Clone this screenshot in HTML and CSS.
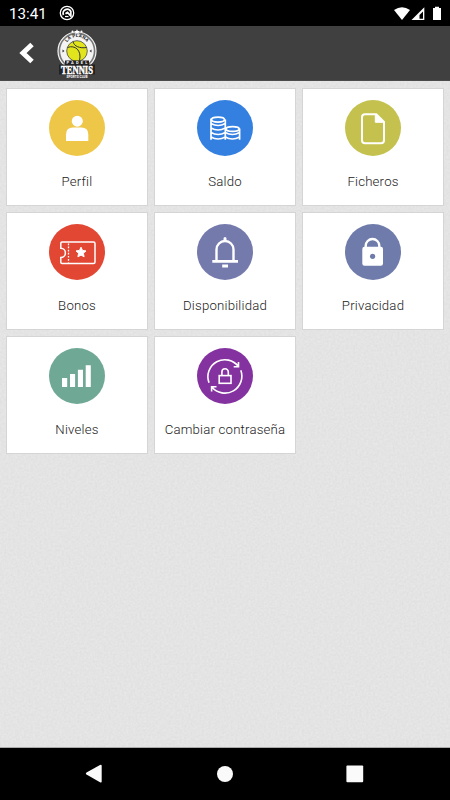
FILE: index.html
```html
<!DOCTYPE html>
<html lang="es">
<head>
<meta charset="utf-8">
<title>La Plana Padel Tennis</title>
<link rel="stylesheet" href="styles.css">
</head>
<body>
<div class="screen">
  <header class="status">
    <span class="clock">13:41</span>
    <svg class="notif" viewBox="0 0 16 16"><circle cx="8" cy="8" r="6.700" fill="none" stroke="#fff" stroke-width="1.300"/><path d="M4.500 10A4 4 0 0 1 11.800 6.500V11L8.500 7.500 6.500 8.800" fill="none" stroke="#fff" stroke-width="1.800"/><path d="M6 11.500h3.500" stroke="#fff" stroke-width="1.200"/></svg>
    <svg class="signals" viewBox="0 0 50 16"><path d="M0 4Q8-1.500 16 4L8 14z" fill="#fff"/><path d="M30.300 1.300V14H17.500z" fill="#fff"/><path d="M29 5.500V12.700H25.500V9z" fill="#000"/><path d="M39 2h2V.7h4V2h2v12h-8z" fill="#fff"/></svg>
  </header>
  <nav class="bar">
    <svg class="back" viewBox="0 0 16 22"><path d="M13 2.500L4 11l9 8.500" fill="none" stroke="#fff" stroke-width="5"/></svg>
    <svg class="logo" viewBox="0 0 42 50">
      <circle cx="21" cy="22" r="19" fill="#777" stroke="#f4f4f4" stroke-width="1.200"/>
      <circle cx="21" cy="22" r="16.800" fill="#f4f4f4"/>
      <circle cx="21" cy="22" r="10.300" fill="#e2e51c" stroke="#333" stroke-width=".7"/>
      <path d="M11.500 18.500C19 15.500 26 21.500 23.500 31.500M17 12.500c1 5 7 7 13.500 6" fill="none" stroke="#333" stroke-width="1"/>
      <path id="ring" d="M9 20A12 12 0 0 1 33 20" fill="none"/>
      <text class="ring-text"><textPath href="#ring" startOffset="50%">LA PLANA</textPath></text>
      <path d="M21 .2l.9 1.700 1.900.2-1.400 1.300.4 1.900-1.800-1-1.800 1 .4-1.900-1.400-1.300 1.900-.2z" fill="#fff"/>
      <circle cx="16.500" cy="2.500" r="1" fill="#fff"/><circle cx="25.500" cy="2.500" r="1" fill="#fff"/>
      <path d="M6.500 20.500l2 1.500-2 1.500zM35.500 20.500l-2 1.500 2 1.500z" fill="#333"/>
      <path d="M9 31.500h24v4h6v10H3v-10h6z" fill="#222"/>
      <text class="logo-padel" x="21" y="35" textLength="21">PADEL</text>
      <text class="logo-tennis" x="21" y="45" textLength="32" lengthAdjust="spacingAndGlyphs">TENNIS</text>
      <text class="logo-club" x="21" y="48.800" textLength="21">SPORTS CLUB</text>
    </svg>
  </nav>
  <main class="content">
    <svg class="grain" aria-hidden="true"><filter id="paper" x="0" y="0" width="100%" height="100%" color-interpolation-filters="sRGB"><feTurbulence type="fractalNoise" baseFrequency=".45" numOctaves="2" seed="4"/><feColorMatrix values=".05 0 0 0 .868 .05 0 0 0 .868 .05 0 0 0 .868 0 0 0 0 1"/></filter><rect width="100%" height="100%" filter="url(#paper)"/></svg>
    <div class="grid">
      <a class="card"><svg class="icon yellow" viewBox="0 0 56 56"><circle cx="28.300" cy="21.200" r="5.500" fill="#fff"/><path d="M17 41v-6.500q0-7 7-7h8.300q7 0 7 7V41z" fill="#fff"/></svg><span>Perfil</span></a>
      <a class="card"><svg class="icon blue" viewBox="0 0 56 56"><g fill="none" stroke="#fff" stroke-width="1.700"><ellipse cx="21" cy="19.600" rx="6.500" ry="2.500"/><path d="M14 18.500V39.800M28.300 19.500V39.800M14 23.500q7 4 14.300 0M14 28q7 4 14.300 0M14 32.500q7 4 14.300 0M14 37q7 4 14.300 0"/><ellipse cx="35.600" cy="29" rx="6.600" ry="2.400"/><path d="M42.600 28.500V39.800M28.300 32.500q7 4 14.300 0M28.300 37q7 4 14.300 0"/></g></svg><span>Saldo</span></a>
      <a class="card"><svg class="icon olive" viewBox="0 0 56 56"><path d="M20 14.200H31.300L39 22V40.200a3 3 0 0 1-3 3H20a3 3 0 0 1-3-3V17.200a3 3 0 0 1 3-3z" fill="none" stroke="#fff" stroke-width="2"/><path d="M30.300 14.500V22.300H38.800z" fill="#fff" stroke="#fff"/></svg><span>Ficheros</span></a>
      <a class="card"><svg class="icon red" viewBox="0 0 56 56"><path d="M13 18H44.500q1.500 0 1.500 1.500V37.900q0 1.500-1.500 1.500H13q-1.200 0-1.200-1.200V33.500a4.600 4.600 0 0 0 0-9.200V19.200q0-1.200 1.200-1.200z" fill="none" stroke="#fff" stroke-width="1.500"/><path d="M19.500 19.500V38.500" stroke="#fff" stroke-width="1.300" stroke-dasharray="1.700 1.400"/><path d="M32 23.200l1.500 3.200 3.500.5-2.600 2.400.7 3.500-3.100-1.700-3.100 1.700.7-3.500-2.600-2.400 3.500-.5z" fill="#fff" stroke="#fff" stroke-width="1" stroke-linejoin="round"/></svg><span>Bonos</span></a>
      <a class="card"><svg class="icon violet" viewBox="0 0 56 56"><path d="M19.500 36.500V25.500a8.500 8.500 0 0 1 17 0V36.500" fill="none" stroke="#fff" stroke-width="2.400"/><path d="M26.500 17V14.500a1.500 1.500 0 0 1 3 0V17zM15.300 36h25.700v2.700H15.300zM25.200 40.500h5.800v3h-5.800z" fill="#fff"/></svg><span>Disponibilidad</span></a>
      <a class="card"><svg class="icon slate" viewBox="0 0 56 56"><path d="M20.700 24V21.800a6.800 6.800 0 0 1 13.600 0V24" fill="none" stroke="#fff" stroke-width="2.400"/><rect x="17.300" y="22.700" width="20.700" height="19" rx="2.200" fill="#fff"/><circle cx="27.600" cy="32.300" r="2.600" fill="#6f7cab"/></svg><span>Privacidad</span></a>
      <a class="card"><svg class="icon green" viewBox="0 0 56 56"><path d="M13 30h5.200v9H13zM21 26h5.100v13H21zM28.900 21.700H34V39h-5.100zM36.700 17.300h5.100V39h-5.100z" fill="#fff"/></svg><span>Niveles</span></a>
      <a class="card"><svg class="icon purple" viewBox="0 0 56 56"><g fill="none" stroke="#fff" stroke-width="1.600"><path d="M12 34.700A17 17 0 0 1 41.500 18.500M41.500 14V18.800H36.700M43.800 22.200A17 17 0 0 1 14.800 39M14.600 43.500V38.700H19.500"/><rect x="22.200" y="27.600" width="11.800" height="7.700"/><path d="M24.900 27.500V24a3.200 3.200 0 0 1 6.400 0v3.500"/></g></svg><span>Cambiar contraseña</span></a>
    </div>
  </main>
  <footer class="system">
    <svg viewBox="0 0 18 20"><path d="M1.500 8.500L15 1q1.700-.7 1.700 1V17.500q0 1.600-1.700.8L1.500 10.600q-1.500-1 0-2.100z" fill="#fafafa"/></svg>
    <svg viewBox="0 0 18 20"><circle cx="9" cy="10" r="8" fill="#fafafa"/></svg>
    <svg viewBox="0 0 18 20"><rect x=".4" y="1.500" width="16.800" height="16.800" rx="1" fill="#fafafa"/></svg>
  </footer>
</div>
</body>
</html>
```
FILE: styles.css
```css
* { box-sizing: border-box; }
body { margin: 0; font-family: Roboto, "Liberation Sans", sans-serif; }
.screen { display: flex; flex-direction: column; width: 450px; height: 800px; overflow: hidden; background: #e3e3e3; }
.status { display: flex; align-items: center; height: 26px; padding: 0 8px 0 9px; background: #000; color: #fff; }
.clock { width: 38px; padding-top: 2px; font-size: 15.2px; line-height: 20px; white-space: nowrap; }
.notif { width: 16px; height: 16px; margin-left: 12px; }
.signals { width: 50px; height: 16px; margin-left: auto; margin-right: -2px; margin-top: 1px; }
.bar { display: flex; align-items: center; height: 55px; padding-left: 19px; background: #404040; border-bottom: 1px solid #4b4b4b; }
.back { width: 16px; height: 22px; }
.logo { width: 42px; height: 50px; margin-left: 21px; margin-top: 2px; overflow: visible; }
.logo text { text-anchor: middle; font-weight: 700; fill: #fff; }
.logo .ring-text { font-size: 4.6px; letter-spacing: .2px; fill: #222; }
.logo .logo-padel { font-size: 4px; }
.logo .logo-tennis { font-family: "Liberation Serif", serif; font-size: 11.5px; stroke: #fff; stroke-width: .5px; }
.logo .logo-club { font-size: 3.2px; }
.content { position: relative; flex: 1; padding: 7px 6px; border-bottom: 1px solid #aaa; }
.grain { position: absolute; inset: 0; width: 100%; height: 100%; }
.grid { position: relative; display: grid; grid-template-columns: repeat(3, 142px); grid-auto-rows: 118px; gap: 6px; }
.card { display: flex; flex-direction: column; align-items: center; padding-top: 11px; background: #fff; border: 1px solid #d5d5d5; }
.card span { margin-top: 15.5px; color: #222; font-size: 13.2px; font-weight: 300; line-height: 20px; letter-spacing: .2px; white-space: nowrap; }
.icon { width: 56px; height: 56px; border-radius: 50%; }
.yellow { background: #eec748; }
.blue { background: #3480e0; }
.olive { background: #c4c14e; }
.red { background: #e14733; }
.violet { background: #757aad; }
.slate { background: #6f7cab; }
.green { background: #6fa995; }
.purple { background: #8432a0; }
.system { display: flex; justify-content: space-between; align-items: center; height: 52px; padding: 0 86px 0 85px; background: #000; }
.system svg { width: 18px; height: 20px; }
```
